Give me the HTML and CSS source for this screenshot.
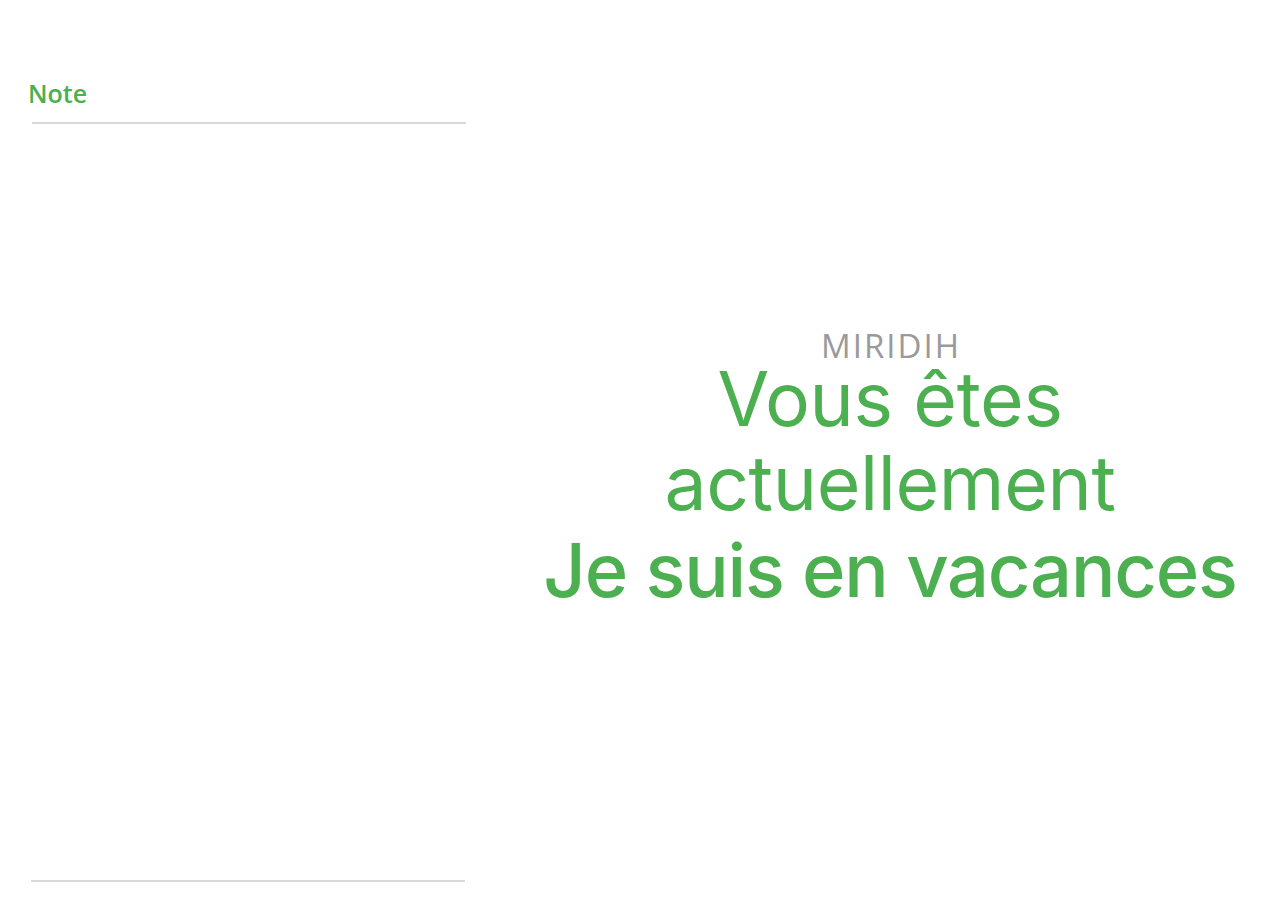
FILE: index.html
```html
<!DOCTYPE html>
<html>
<head>
<meta charset="utf-8">
<link rel="stylesheet" href="styles.css">
</head>
<body>
<div class="page">
  <aside class="note-panel">
    <h2 class="note-title">Note</h2>
    <div class="note-rule"></div>
    <div class="note-body"></div>
    <div class="note-rule note-rule-bottom"></div>
  </aside>
  <main class="stage">
    <div class="brand">MIRIDIH</div>
    <div class="headline">
      <span class="line">Vous êtes</span>
      <span class="line">actuellement</span>
    </div>
    <div class="headline-strong">Je suis en vacances</div>
  </main>
</div>
</body>
</html>
```

FILE: styles.css
```css
html, body {
  margin: 0;
  padding: 0;
  background: #ffffff;
}
.page {
  display: flex;
  width: 1280px;
  height: 916px;
}
.note-panel {
  width: 500px;
  display: flex;
  flex-direction: column;
  padding: 0 0 0 28px;
  box-sizing: border-box;
}
.note-title {
  margin: 76px 0 0 0;
  font-family: "Open Sans", sans-serif;
  font-weight: 600;
  font-size: 25px;
  line-height: 34px;
  color: #4caf50;
}
.note-rule {
  margin: 12px 0 0 4px;
  width: 434px;
  height: 2px;
  background: #d9d9d9;
}
.note-body {
  flex: 1;
}
.note-rule-bottom {
  margin: 0 0 34px 3px;
}
.stage {
  flex: 1;
  display: flex;
  flex-direction: column;
  align-items: center;
  text-align: center;
  padding-top: 331px;
}
.brand {
  font-family: "Open Sans", sans-serif;
  font-size: 33px;
  line-height: 30px;
  letter-spacing: 2px;
  color: #9a9a9a;
  padding-left: 2px;
  margin-bottom: 3px;
}
.headline {
  display: flex;
  flex-direction: column;
  align-items: center;
  gap: 14px;
  font-family: Inter, sans-serif;
  font-size: 75px;
  line-height: 70px;
  letter-spacing: -0.4px;
  color: #4caf50;
  font-weight: 400;
}
.line {
  display: block;
}
.headline-strong {
  margin-top: 17px;
  font-family: Inter, sans-serif;
  font-size: 74px;
  line-height: 70px;
  letter-spacing: -1.2px;
  font-weight: 500;
  color: #4caf50;
}
```
